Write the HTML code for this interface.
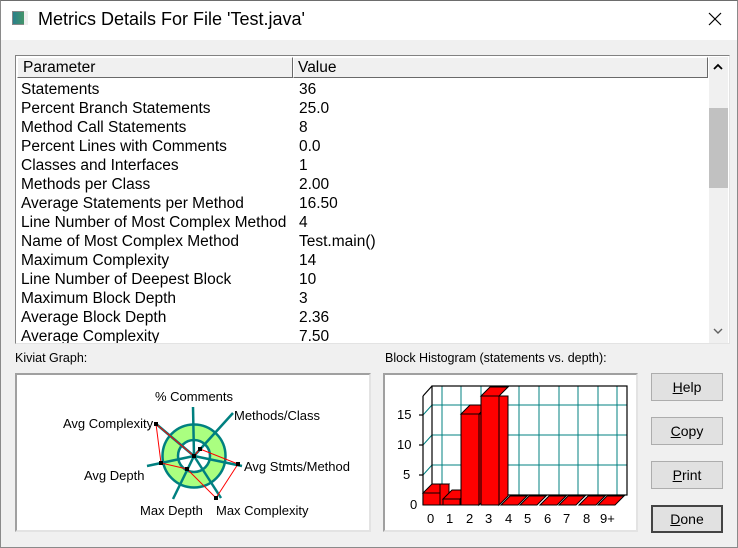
<!DOCTYPE html>
<html><head><style>
*{margin:0;padding:0;box-sizing:border-box}
body{width:738px;height:548px;background:#f0f0f0;font-family:"Liberation Sans",Arial,sans-serif;position:relative;overflow:hidden}
.a{position:absolute}
.t{position:absolute;white-space:nowrap}
.btn{position:absolute;left:651px;width:72px;height:28px;background:#e1e1e1;border:1px solid #adadad;font-size:14px;text-align:center;line-height:26px;color:#000}
.row{position:absolute;left:21px;font-size:15.5px;color:#000;white-space:nowrap;line-height:19px}
.v{position:absolute;left:299px;font-size:15.5px;white-space:nowrap;line-height:19px}
</style></head><body>
<div class="a" style="left:0;top:0;width:738px;height:40px;background:#fff"></div>
<div class="a" style="left:0;top:0;width:738px;height:548px;border:1px solid #8a8a8a;border-top-color:#6d6d6d"></div>
<div class="a" style="left:12px;top:11px;width:16px;height:14px;background:linear-gradient(90deg,#2a7f8a,#4a9a60);border:1px solid #888"></div>
<div class="a" style="left:24px;top:11px;width:4px;height:14px;background:#eee"></div>
<div class="t" style="left:38px;top:9px;font-size:18px;font-family:'Liberation Sans',sans-serif">Metrics Details For File 'Test.java'</div>
<svg class="a" style="left:708px;top:12px" width="14" height="14"><path d="M1 1L13 13M13 1L1 13" stroke="#000" stroke-width="1.2"/></svg>

<div class="a" style="left:15px;top:55px;width:715px;height:289px;background:#fff;border:1px solid #828282;border-right-color:#e3e3e3;border-bottom-color:#e3e3e3"></div>
<div class="a" style="left:17px;top:57px;width:276px;height:21px;background:#f0f0f0;border:1px solid #fff;border-right-color:#696969;border-bottom-color:#696969"></div>
<div class="a" style="left:293px;top:57px;width:415px;height:21px;background:#f0f0f0;border:1px solid #fff;border-right-color:#696969;border-bottom-color:#696969"></div>
<div class="t" style="left:23px;top:58px;font-size:15.5px;line-height:19px">Parameter</div>
<div class="t" style="left:298px;top:58px;font-size:15.5px;line-height:19px">Value</div>
<div class="a" style="left:709px;top:57px;width:19px;height:286px;background:#f0f0f0"></div>
<div class="a" style="left:709px;top:108px;width:19px;height:80px;background:#c1c1c1"></div>
<svg class="a" style="left:712px;top:62px" width="12" height="10"><path d="M2 7L6 3L10 7" stroke="#000" stroke-width="1.8" fill="none"/></svg>
<svg class="a" style="left:712px;top:326px" width="12" height="10"><path d="M2 3L6 7L10 3" stroke="#606060" stroke-width="1.4" fill="none"/></svg>

<div class="a" style="left:17px;top:79px;width:692px;height:264px;overflow:hidden">
<div style="position:relative;left:-17px;top:-79px">
<div class="row" style="top:80px">Statements</div><div class="v" style="top:80px">36</div>
<div class="row" style="top:99px">Percent Branch Statements</div><div class="v" style="top:99px">25.0</div>
<div class="row" style="top:118px">Method Call Statements</div><div class="v" style="top:118px">8</div>
<div class="row" style="top:137px">Percent Lines with Comments</div><div class="v" style="top:137px">0.0</div>
<div class="row" style="top:156px">Classes and Interfaces</div><div class="v" style="top:156px">1</div>
<div class="row" style="top:175px">Methods per Class</div><div class="v" style="top:175px">2.00</div>
<div class="row" style="top:194px">Average Statements per Method</div><div class="v" style="top:194px">16.50</div>
<div class="row" style="top:213px">Line Number of Most Complex Method</div><div class="v" style="top:213px">4</div>
<div class="row" style="top:232px">Name of Most Complex Method</div><div class="v" style="top:232px">Test.main()</div>
<div class="row" style="top:251px">Maximum Complexity</div><div class="v" style="top:251px">14</div>
<div class="row" style="top:270px">Line Number of Deepest Block</div><div class="v" style="top:270px">10</div>
<div class="row" style="top:289px">Maximum Block Depth</div><div class="v" style="top:289px">3</div>
<div class="row" style="top:308px">Average Block Depth</div><div class="v" style="top:308px">2.36</div>
<div class="row" style="top:327px">Average Complexity</div><div class="v" style="top:327px">7.50</div>
</div></div>

<div class="t" style="left:15px;top:351px;font-size:12.5px">Kiviat Graph:</div>
<div class="t" style="left:385px;top:351px;font-size:12.5px">Block Histogram (statements vs. depth):</div>
<div class="a" style="left:15px;top:373px;width:356px;height:159px;background:#fff;border:2px solid #a0a0a0;border-right-color:#e3e3e3;border-bottom-color:#e3e3e3"></div>
<div class="a" style="left:383px;top:373px;width:255px;height:159px;background:#fff;border:2px solid #a0a0a0;border-right-color:#e3e3e3;border-bottom-color:#e3e3e3"></div>

<svg class="a" style="left:0;top:0" width="738" height="548" font-family="Liberation Sans,Arial,sans-serif" font-size="13">
<circle cx="194" cy="456" r="24" fill="none" stroke="#aaff80" stroke-width="15"/>
<circle cx="194" cy="456" r="31.5" fill="none" stroke="#008080" stroke-width="2.5"/>
<circle cx="194" cy="456" r="16" fill="none" stroke="#008080" stroke-width="2.5"/>
<g stroke="#008080" stroke-width="2.5">
<line x1="194" y1="456" x2="193" y2="407"/><line x1="194" y1="456" x2="233" y2="413"/><line x1="194" y1="456" x2="242" y2="466"/>
<line x1="194" y1="456" x2="221" y2="498"/><line x1="194" y1="456" x2="173" y2="499"/><line x1="194" y1="456" x2="147" y2="466"/><line x1="194" y1="456" x2="155" y2="423"/></g>
<polygon points="194,456 200,449 238,464 216,498 187,469 161,463 156,424" fill="none" stroke="#f00" stroke-width="1"/>
<g fill="#000"><rect x="154" y="422" width="4" height="4"/><rect x="236" y="462" width="4" height="4"/><rect x="214" y="496" width="4" height="4"/><rect x="185" y="467" width="4" height="4"/><rect x="159" y="461" width="4" height="4"/><rect x="198" y="447" width="4" height="4"/><rect x="192" y="454" width="4" height="4"/></g>
<text x="155" y="401">% Comments</text><text x="234" y="420">Methods/Class</text><text x="244" y="471">Avg Stmts/Method</text>
<text x="216" y="515">Max Complexity</text><text x="140" y="515">Max Depth</text><text x="84" y="480">Avg Depth</text><text x="63" y="428">Avg Complexity</text>

<g stroke="#008080" stroke-width="1">
<line x1="442" y1="386" x2="442" y2="495"/><line x1="461" y1="386" x2="461" y2="495"/><line x1="481" y1="386" x2="481" y2="495"/><line x1="500" y1="386" x2="500" y2="495"/><line x1="519" y1="386" x2="519" y2="495"/><line x1="539" y1="386" x2="539" y2="495"/><line x1="559" y1="386" x2="559" y2="495"/><line x1="578" y1="386" x2="578" y2="495"/><line x1="598" y1="386" x2="598" y2="495"/><line x1="617" y1="386" x2="617" y2="495"/>
<line x1="432" y1="405" x2="627" y2="405"/><line x1="432" y1="435" x2="627" y2="435"/><line x1="432" y1="465" x2="627" y2="465"/>
<line x1="423" y1="415" x2="432" y2="405"/><line x1="423" y1="445" x2="432" y2="435"/><line x1="423" y1="475" x2="432" y2="465"/></g>
<g stroke="#000" stroke-width="1.2" fill="none">
<rect x="432" y="386" width="195" height="109"/><line x1="423" y1="396" x2="432" y2="386"/><line x1="423" y1="396" x2="423" y2="505"/><line x1="423" y1="505" x2="432" y2="495"/>
<line x1="419" y1="415" x2="423" y2="415"/><line x1="419" y1="445" x2="423" y2="445"/><line x1="419" y1="475" x2="423" y2="475"/></g>
<g fill="#f00" stroke="#000" stroke-width="1">
<path d="M501 505h17l9-9h-17z"/><path d="M520 505h17l9-9h-17z"/><path d="M540 505h17l9-9h-17z"/><path d="M559 505h17l9-9h-17z"/><path d="M579 505h17l9-9h-17z"/><path d="M598 505h17l9-9h-17z"/>
<path d="M423 493h17l9-9h-17z"/><rect x="440" y="484" width="9" height="21"/><rect x="423" y="493" width="17" height="12"/>
<path d="M443 499h17l9-9h-17z"/><rect x="443" y="499" width="17" height="6"/>
<path d="M461 414h18l9-9h-18z"/><path d="M479 414h9v82l-9 9z"/><rect x="461" y="414" width="18" height="91"/>
<path d="M481 396h18l9-9h-18z"/><path d="M499 396h9v100l-9 9z"/><rect x="481" y="396" width="18" height="109"/>
</g>
<g font-size="13" fill="#000"><text x="410" y="509">0</text><text x="403" y="479">5</text><text x="397" y="449">10</text><text x="397" y="419">15</text>
<text x="427" y="523">0</text><text x="446" y="523">1</text><text x="466" y="523">2</text><text x="485" y="523">3</text><text x="505" y="523">4</text><text x="524" y="523">5</text><text x="544" y="523">6</text><text x="563" y="523">7</text><text x="583" y="523">8</text><text x="600" y="523">9+</text></g>
</svg>

<div class="btn" style="top:373px"><u>H</u>elp</div>
<div class="btn" style="top:417px"><u>C</u>opy</div>
<div class="btn" style="top:461px"><u>P</u>rint</div>
<div class="btn" style="top:505px;border:2px solid #444;line-height:24px"><u>D</u>one</div>
</body></html>
